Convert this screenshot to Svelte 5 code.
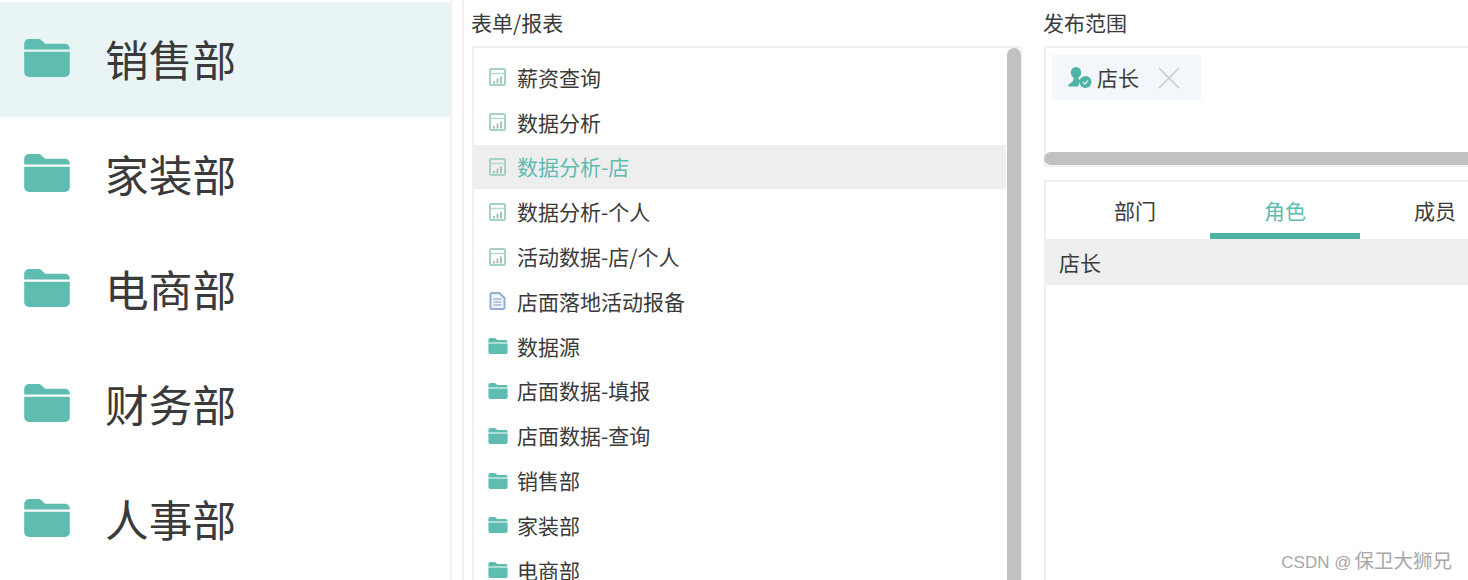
<script>
  const departments = ['销售部', '家装部', '电商部', '财务部', '人事部'];
  const reports = [
    { name: '薪资查询', type: 'report' },
    { name: '数据分析', type: 'report' },
    { name: '数据分析-店', type: 'report', active: true },
    { name: '数据分析-个人', type: 'report' },
    { name: '活动数据-店/个人', type: 'report' },
    { name: '店面落地活动报备', type: 'doc' },
    { name: '数据源', type: 'folder' },
    { name: '店面数据-填报', type: 'folder' },
    { name: '店面数据-查询', type: 'folder' },
    { name: '销售部', type: 'folder' },
    { name: '家装部', type: 'folder' },
    { name: '电商部', type: 'folder' }
  ];
  const tabs = ['部门', '角色', '成员'];
</script>

{#snippet folder(cls)}
  <svg class={cls} viewBox="0 0 48 40">
    <path d="M0 11V5a5 5 0 0 1 5-5h10a6 6 0 0 1 4 2l3 3h21a5 5 0 0 1 5 5v1H0z" fill="#5fbcb0" />
    <path d="M0 13.500h48V35a5 5 0 0 1-5 5H5a5 5 0 0 1-5-5z" fill="#5fbcb0" />
  </svg>
{/snippet}

<div class="page">
  <aside class="sidebar">
    {#each departments as dept, i}
      <div class="dept" class:selected={i === 0}>
        {@render folder('dept-icon')}
        <span>{dept}</span>
      </div>
    {/each}
  </aside>

  <div class="gutter"></div>

  <section class="reports">
    <div class="label">表单/报表</div>
    <div class="list-box">
      <div class="list">
        {#each reports as item}
          <div class="row" class:active={item.active}>
            {#if item.type === 'report'}
              <svg class="row-icon" viewBox="0 0 17 18" fill="none">
                <rect x="1" y="1" width="15" height="16" rx="1" stroke="#a6d3bf" stroke-width="2" />
                <path d="M1.500 5.500h14" stroke="#b5dccb" stroke-width="1.500" />
                <path d="M5 15.500v-2.500M8.500 15.500v-5M12 15.500V8.500" stroke="#a9c2b6" stroke-width="2" />
              </svg>
            {:else if item.type === 'doc'}
              <svg class="row-icon" viewBox="0 0 17 18" fill="none">
                <path d="M1.500 2.500a1.500 1.500 0 0 1 1.500-1.500h7.500l5 5v9.500a1.500 1.500 0 0 1-1.500 1.500H3a1.500 1.500 0 0 1-1.500-1.500z" stroke="#8fadd8" stroke-width="2" fill="#f1f5fb" />
                <path d="M4.500 7h8M4.500 10h8M4.500 13h8" stroke="#a3badd" stroke-width="1.500" />
              </svg>
            {:else}
              {@render folder('row-folder')}
            {/if}
            <span>{item.name}</span>
          </div>
        {/each}
      </div>
      <div class="vscroll"></div>
    </div>
  </section>

  <section class="scope">
    <div class="label">发布范围</div>
    <div class="chosen">
      <div class="chip">
        <svg class="chip-icon" viewBox="0 0 24 21">
          <ellipse cx="8" cy="5.500" rx="5.200" ry="5.500" fill="#4fb3a6" />
          <path d="M5.500 9.500h5c0 2.500.5 3.200 2 3.800L10 19.500H1.500C0 19.500-.3 18 1 17.200c3-1.800 5-3 4.500-7.700z" fill="#4fb3a6" />
          <circle cx="17.500" cy="15" r="6" fill="#4fb3a6" />
          <path d="M14.800 15l2 2 3.200-3.500" stroke="#d8f0ec" stroke-width="1.300" fill="none" />
        </svg>
        <span>店长</span>
        <svg class="chip-close" viewBox="0 0 22 22">
          <path d="M1 1l20 20M21 1L1 21" stroke="#c9c9c9" stroke-width="1.500" />
        </svg>
      </div>
      <div class="hscroll"></div>
    </div>
    <div class="picker">
      <div class="tabs">
        {#each tabs as tab, i}
          <div class="tab" class:current={i === 1}>{tab}</div>
        {/each}
      </div>
      <div class="picked">店长</div>
    </div>
  </section>

  <div class="watermark">CSDN @<span>保卫大狮兄</span></div>
</div>

<style>
  :global(body) {
    margin: 0;
    background: #fff;
    overflow: hidden;
  }

  .page {
    position: relative;
    display: flex;
    width: 1468px;
    height: 580px;
    overflow: hidden;
    font-family: "Noto Sans CJK SC", "Liberation Sans", sans-serif;
    color: #3a3a3a;
  }

  .sidebar {
    flex: none;
    width: 450px;
    padding-top: 2px;
    border-right: 2px solid #f2f2f2;
  }

  .dept {
    display: flex;
    align-items: center;
    height: 115px;
    padding-left: 24px;
    font-size: 43.7px;
  }

  .dept span {
    margin-top: -4px;
  }

  .dept.selected {
    background: #e9f5f5;
  }

  .dept-icon {
    width: 46px;
    height: 38px;
    margin-right: 35px;
    margin-bottom: 4px;
  }

  .gutter {
    flex: none;
    width: 10px;
    margin-right: 8px;
    border-right: 2px solid #f2f2f2;
  }

  .label {
    height: 46px;
    margin-left: -1px;
    font-size: 21px;
    line-height: 44px;
  }

  .reports {
    flex: none;
    width: 550px;
  }

  .list-box {
    display: flex;
    height: 540px;
    border: 2px solid #f0f0f0;
    border-right-width: 1px;
    box-sizing: border-box;
  }

  .list {
    flex: 1;
    margin-right: 1px;
    padding-top: 7px;
  }

  .row {
    display: flex;
    align-items: center;
    height: 44.8px;
    padding-left: 15px;
    font-size: 21px;
  }

  .row span {
    margin-top: -1px;
  }

  .row.active {
    background: #eeeeee;
    color: #5dbcb0;
  }

  .row-icon {
    width: 17px;
    height: 18px;
    margin-right: 11px;
  }

  .row-folder {
    width: 20px;
    height: 16px;
    margin-left: -1px;
    margin-right: 9px;
  }

  .vscroll {
    flex: none;
    width: 14px;
    border-radius: 7px 7px 0 0;
    background: #c1c1c1;
  }

  .scope {
    flex: none;
    width: 424px;
    margin-left: 22px;
  }

  .chosen {
    box-sizing: border-box;
    height: 121px;
    padding: 7px 0 0 6px;
    border: 2px solid #f0f0f0;
    border-right: 0;
    position: relative;
  }

  .chip {
    display: flex;
    align-items: center;
    width: 149px;
    height: 45px;
    padding-left: 16px;
    box-sizing: border-box;
    background: #f3f6fb;
    font-size: 21px;
  }

  .chip span {
    margin-top: -2px;
  }

  .chip-icon {
    width: 24px;
    height: 21px;
    margin-right: 5px;
  }

  .chip-close {
    width: 22px;
    height: 22px;
    margin-left: 19px;
  }

  .hscroll {
    position: absolute;
    left: -2px;
    right: 0;
    bottom: 0;
    height: 13px;
    border-radius: 7px 0 0 7px;
    background: #c1c1c1;
  }

  .picker {
    box-sizing: border-box;
    height: 400px;
    margin-top: 13px;
    border: 2px solid #f0f0f0;
    border-right: 0;
    border-bottom: 0;
  }

  .tabs {
    display: flex;
    padding-left: 14px;
    width: 470px;
  }

  .tab {
    flex: none;
    box-sizing: border-box;
    width: 150px;
    height: 57px;
    border-bottom: 6px solid transparent;
    text-align: center;
    font-size: 21px;
    line-height: 57px;
  }

  .tab.current {
    border-bottom-color: #4fb0a3;
    color: #5dbcb0;
  }

  .picked {
    height: 46px;
    padding-left: 13px;
    background: #eeeeee;
    font-size: 21px;
    line-height: 47px;
  }

  .watermark {
    position: absolute;
    right: 16px;
    bottom: 6px;
    font-family: "Liberation Sans", "Noto Sans CJK SC", sans-serif;
    font-size: 17px;
    color: #a8a8a8;
  }

  .watermark span {
    margin-left: 3px;
    font-size: 19.5px;
  }
</style>
